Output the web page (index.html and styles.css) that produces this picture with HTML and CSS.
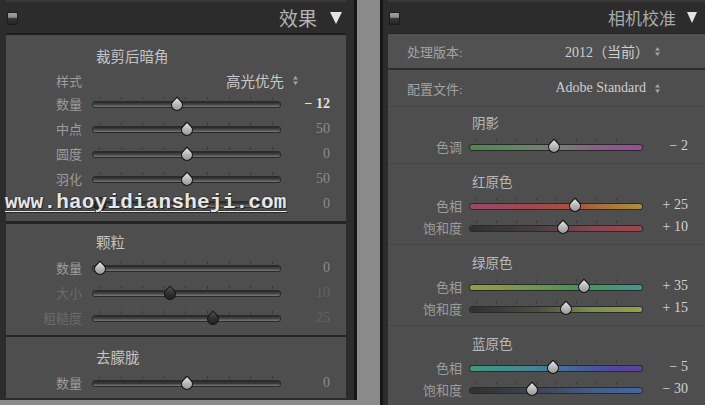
FILE: index.html
```html
<!DOCTYPE html>
<html lang="zh-CN">
<head>
  <meta charset="UTF-8">
  <title>效果 / 相机校准</title>
  <link rel="stylesheet" href="styles.css">
</head>
<body>
  <div class="page">
    <div class="panel panel-left">
      <div class="panel-head">
        <span class="grip"></span>
        <h2 class="head-title">效果</h2>
        <span class="tri"></span>
      </div>
      <div class="panel-body">
        <section class="fx-group first">
          <div class="fx-title">裁剪后暗角</div>
          <div class="sel-row">
            <span class="lbl">样式</span>
            <span class="sel">高光优先</span>
            <svg class="updown" width="5" height="9" viewBox="0 0 5 9"><path d="M0 3.5L2.5 0 5 3.5z M0 5.5L2.5 9 5 5.5z" fill="#a4a4a4"/></svg>
          </div>
          <div class="srow">
            <span class="lbl">数量</span>
            <div class="slider"><div class="track"></div><span class="thumb" style="left:45%"></span></div>
            <span class="val hi">− 12</span>
          </div>
          <div class="srow">
            <span class="lbl">中点</span>
            <div class="slider"><div class="track"></div><span class="thumb" style="left:50%"></span></div>
            <span class="val">50</span>
          </div>
          <div class="srow">
            <span class="lbl">圆度</span>
            <div class="slider"><div class="track"></div><span class="thumb" style="left:50%"></span></div>
            <span class="val">0</span>
          </div>
          <div class="srow">
            <span class="lbl">羽化</span>
            <div class="slider"><div class="track"></div><span class="thumb" style="left:50%"></span></div>
            <span class="val">50</span>
          </div>
          <div class="srow">
            <span class="lbl"></span>
            <div class="slider"><div class="track"></div><span class="thumb dark" style="left:4%"></span></div>
            <span class="val">0</span>
          </div>
        </section>

        <section class="fx-group second">
          <div class="fx-title">颗粒</div>
          <div class="srow">
            <span class="lbl">数量</span>
            <div class="slider"><div class="track"></div><span class="thumb" style="left:4%"></span></div>
            <span class="val">0</span>
          </div>
          <div class="srow">
            <span class="lbl dim">大小</span>
            <div class="slider"><div class="track"></div><span class="thumb dark" style="left:41%"></span></div>
            <span class="val dim">10</span>
          </div>
          <div class="srow">
            <span class="lbl dim">粗糙度</span>
            <div class="slider"><div class="track"></div><span class="thumb dark" style="left:64%"></span></div>
            <span class="val dim">25</span>
          </div>
        </section>

        <section class="fx-group third">
          <div class="fx-title">去朦胧</div>
          <div class="srow">
            <span class="lbl">数量</span>
            <div class="slider"><div class="track split"></div><span class="thumb" style="left:50%"></span></div>
            <span class="val">0</span>
          </div>
        </section>
      </div>
    </div>

    <div class="panel panel-right">
      <div class="panel-head">
        <span class="grip"></span>
        <h2 class="head-title">相机校准</h2>
        <span class="tri"></span>
      </div>
      <div class="panel-body">
        <div class="info-row process">
          <span class="info-lbl">处理版本:</span>
          <span class="info-val">2012（当前）</span>
          <svg class="updown" width="5" height="9" viewBox="0 0 5 9"><path d="M0 3.5L2.5 0 5 3.5z M0 5.5L2.5 9 5 5.5z" fill="#a4a4a4"/></svg>
        </div>
        <div class="info-row profile">
          <span class="info-lbl">配置文件:</span>
          <span class="info-val">Adobe Standard</span>
          <svg class="updown" width="5" height="9" viewBox="0 0 5 9"><path d="M0 3.5L2.5 0 5 3.5z M0 5.5L2.5 9 5 5.5z" fill="#a4a4a4"/></svg>
        </div>

        <section class="cal-group shadows">
          <div class="cal-title">阴影</div>
          <div class="crow">
            <span class="lbl">色调</span>
            <div class="slider"><div class="track t-tone"></div><span class="thumb" style="left:49%"></span></div>
            <span class="val">− 2</span>
          </div>
        </section>

        <section class="cal-group">
          <div class="cal-title">红原色</div>
          <div class="crow">
            <span class="lbl">色相</span>
            <div class="slider"><div class="track t-rhue"></div><span class="thumb" style="left:61%"></span></div>
            <span class="val">+ 25</span>
          </div>
          <div class="crow">
            <span class="lbl">饱和度</span>
            <div class="slider"><div class="track t-rsat"></div><span class="thumb" style="left:54%"></span></div>
            <span class="val">+ 10</span>
          </div>
        </section>

        <section class="cal-group">
          <div class="cal-title">绿原色</div>
          <div class="crow">
            <span class="lbl">色相</span>
            <div class="slider"><div class="track t-ghue"></div><span class="thumb" style="left:66%"></span></div>
            <span class="val">+ 35</span>
          </div>
          <div class="crow">
            <span class="lbl">饱和度</span>
            <div class="slider"><div class="track t-gsat"></div><span class="thumb" style="left:56%"></span></div>
            <span class="val">+ 15</span>
          </div>
        </section>

        <section class="cal-group last">
          <div class="cal-title">蓝原色</div>
          <div class="crow">
            <span class="lbl">色相</span>
            <div class="slider"><div class="track t-bhue"></div><span class="thumb" style="left:48%"></span></div>
            <span class="val">− 5</span>
          </div>
          <div class="crow">
            <span class="lbl">饱和度</span>
            <div class="slider"><div class="track t-bsat"></div><span class="thumb" style="left:36%"></span></div>
            <span class="val">− 30</span>
          </div>
        </section>
      </div>
    </div>

    <div class="watermark">www.haoyidiansheji.com</div>
  </div>
</body>
</html>
```

FILE: styles.css
```css
body {
  margin: 0;
  background-color: #8b8b8b;
  font-family: 'Liberation Serif', 'Noto Sans CJK SC', serif;
  overflow: hidden;
}
.page {
  position: relative;
  width: 705px;
  height: 405px;
  display: flex;
  align-items: flex-start;
}
.panel {
  background-color: #2c2c2c;
  display: flex;
  flex-direction: column;
  box-sizing: border-box;
}
.panel-left {
  width: 357px;
  height: 400px;
  margin-right: 23px;
  padding: 0 8px 2px 6px;
  border-right: 3px solid #151515;
}
.panel-right {
  flex: 1;
  height: 405px;
  padding-left: 5px;
  border-left: 3px solid #161616;
}
.panel-head {
  height: 33px;
  display: flex;
  align-items: center;
  flex-shrink: 0;
  box-sizing: border-box;
  border-top: 2px solid #3a3a3a;
}
.panel-left .panel-head {
  padding: 0 4px 0 2px;
}
.panel-right .panel-head {
  padding: 0 8px 0 2px;
}
.grip {
  width: 9px;
  height: 11px;
  margin-top: 1px;
  border-radius: 1px;
  background: linear-gradient(to bottom, #a2a2a2 0, #8a8a8a 40%, #3a3a3a 45%, #242424 100%);
  box-shadow: 0 0 0 1px #1c1c1c;
}
.head-title {
  margin: 0 0 0 auto;
  font-weight: normal;
  font-family: 'Noto Sans CJK SC', sans-serif;
}
.panel-left .head-title {
  font-size: 19px;
  color: #b4b4b4;
}
.panel-right .head-title {
  font-size: 17px;
  color: #a9a9a9;
}
.tri {
  width: 0;
  height: 0;
  border-left: 6px solid transparent;
  border-right: 6px solid transparent;
  border-top: 12px solid #e4e4e4;
  margin-left: 13px;
}
.panel-right .tri {
  border-left-width: 5px;
  border-right-width: 5px;
  border-top-width: 11px;
  margin-left: 11px;
}
.panel-body {
  flex: 1;
  background-color: #4e4e4e;
  position: relative;
  overflow: hidden;
}

/* 效果 */
.panel-left .panel-body {
  border-top: 2px solid #1e1e1e;
}
.fx-group {
  padding: 10px 0 5px;
}
.fx-group.second {
  border-top: 3px solid #252525;
  padding-top: 7px;
}
.fx-group.third {
  border-top: 2px solid #262626;
  padding-top: 9px;
}
.fx-title {
  height: 24px;
  line-height: 24px;
  padding-left: 90px;
  font-size: 14.5px;
  color: #c4c4c4;
}
.sel-row {
  height: 22px;
  display: flex;
  align-items: center;
  padding-right: 48px;
}
.sel {
  margin-left: auto;
  font-size: 14.5px;
  color: #c8c8c8;
}
.sel-row .updown {
  margin-left: 9px;
}
.srow,
.crow {
  display: flex;
  align-items: center;
}
.srow {
  height: 25px;
}
.lbl {
  font-size: 13px;
  color: #9c9c9c;
  text-align: right;
  flex-shrink: 0;
}
.lbl.dim {
  color: #6a6a6a;
}
.srow .lbl,
.sel-row .lbl {
  width: 76px;
}
.srow .slider {
  width: 187px;
  height: 25px;
  margin-left: 11px;
}
.val {
  font-size: 14px;
  color: #8c8c8c;
  text-align: right;
  flex-shrink: 0;
}
.val.hi {
  color: #e0e0e0;
  font-weight: bold;
}
.val.dim {
  color: #626262;
}
.srow .val {
  width: 50px;
}

/* 滑块 */
.slider {
  position: relative;
  flex-shrink: 0;
}
.slider::before {
  content: '';
  position: absolute;
  left: 6px;
  right: 6px;
  top: 6px;
  height: 3px;
  background: repeating-linear-gradient(to right, #383838 0 1px, transparent 1px 21.6px);
}
.track {
  position: absolute;
  left: 0;
  right: 0;
  top: 11px;
  height: 5px;
  border-radius: 3px;
  background: linear-gradient(to bottom, #262626, #4a4a4a 55%, #7a7a7a);
  box-shadow: 0 0 0 1px #2a2a2a;
}
.track.split {
  background: linear-gradient(to bottom, #2a2a2a, #3a3a3a 50%, #7e7e7e);
}
.thumb {
  position: absolute;
  top: 7.5px;
  width: 12px;
  height: 12px;
  margin-left: -6px;
  box-sizing: border-box;
  border: 1px solid #141414;
  border-radius: 0 50% 50% 50%;
  background: linear-gradient(135deg, #e6e6e6, #b4b4b4 50%, #8e8e8e);
  transform: rotate(45deg);
}
.thumb.dark {
  background: linear-gradient(135deg, #505050, #2e2e2e 50%, #1c1c1c);
}

/* 相机校准 */
.panel-right .panel-body {
  border-top: 1px solid #242424;
}
.info-row {
  display: flex;
  align-items: center;
  padding: 0 45px 0 19px;
}
.info-row.process {
  height: 34px;
  border-bottom: 2px solid #2e2e2e;
  background-color: #515151;
}
.info-row.profile {
  height: 36px;
  border-bottom: 1px solid #464646;
}
.info-lbl {
  font-size: 13px;
  color: #a2a2a2;
}
.info-val {
  margin-left: auto;
  font-size: 14px;
  color: #cfcfcf;
}
.info-row .updown {
  margin-left: 9px;
}
.info-row.process .updown {
  margin-left: 6px;
}
.cal-group {
  padding: 8px 0 6px;
  border-bottom: 1px solid #464646;
}
.cal-group.shadows {
  padding-top: 6px;
}
.cal-group.last {
  border-bottom: none;
}
.cal-title {
  height: 22px;
  line-height: 22px;
  padding-left: 84px;
  font-size: 13.5px;
  color: #b8b8b8;
}
.crow {
  height: 22px;
}
.crow .lbl {
  width: 74px;
}
.crow .slider {
  width: 172px;
  height: 22px;
  margin-left: 8px;
}
.crow .slider::before {
  top: 4px;
  background: repeating-linear-gradient(to right, #3c3c3c 0 1px, transparent 1px 20px);
}
.crow .track {
  top: 9.5px;
}
.crow .thumb {
  top: 6px;
}
.crow .val {
  width: 46px;
  color: #d2d2d2;
}
.t-tone {
  background: linear-gradient(to right, #4a8a4e, #6a8468 35%, #7a7a7a 55%, #8a5e8a 75%, #9a4a9c);
}
.t-rhue {
  background: linear-gradient(to right, #964a6a, #a2464e 35%, #a8523e 60%, #aa7a3c 85%, #a8903e);
}
.t-rsat {
  background: linear-gradient(to right, #303030, #48403f 40%, #844650 70%, #a0464e);
}
.t-ghue {
  background: linear-gradient(to right, #9a9a44, #76984a 30%, #4a9452 60%, #409878 85%, #3e9a92);
}
.t-gsat {
  background: linear-gradient(to right, #303030, #4a5040 40%, #7a9048 70%, #92a24c);
}
.t-bhue {
  background: linear-gradient(to right, #3e9a7c, #468696 35%, #465e9c 65%, #52469c 85%, #5c4298);
}
.t-bsat {
  background: linear-gradient(to right, #303030, #3e4452 40%, #445c86 70%, #4666a0);
}

.watermark {
  position: absolute;
  left: 5px;
  top: 191px;
  font-family: 'Liberation Mono', monospace;
  font-weight: bold;
  font-size: 21px;
  line-height: 24px;
  letter-spacing: 0.2px;
  color: #e6e6e6;
  text-decoration: underline;
  text-decoration-thickness: 1px;
  text-underline-offset: 3px;
  text-shadow: 1px 1px 0 #262626, -1px 0 0 #3a3a3a, 0 -1px 0 #3a3a3a;
}
```
